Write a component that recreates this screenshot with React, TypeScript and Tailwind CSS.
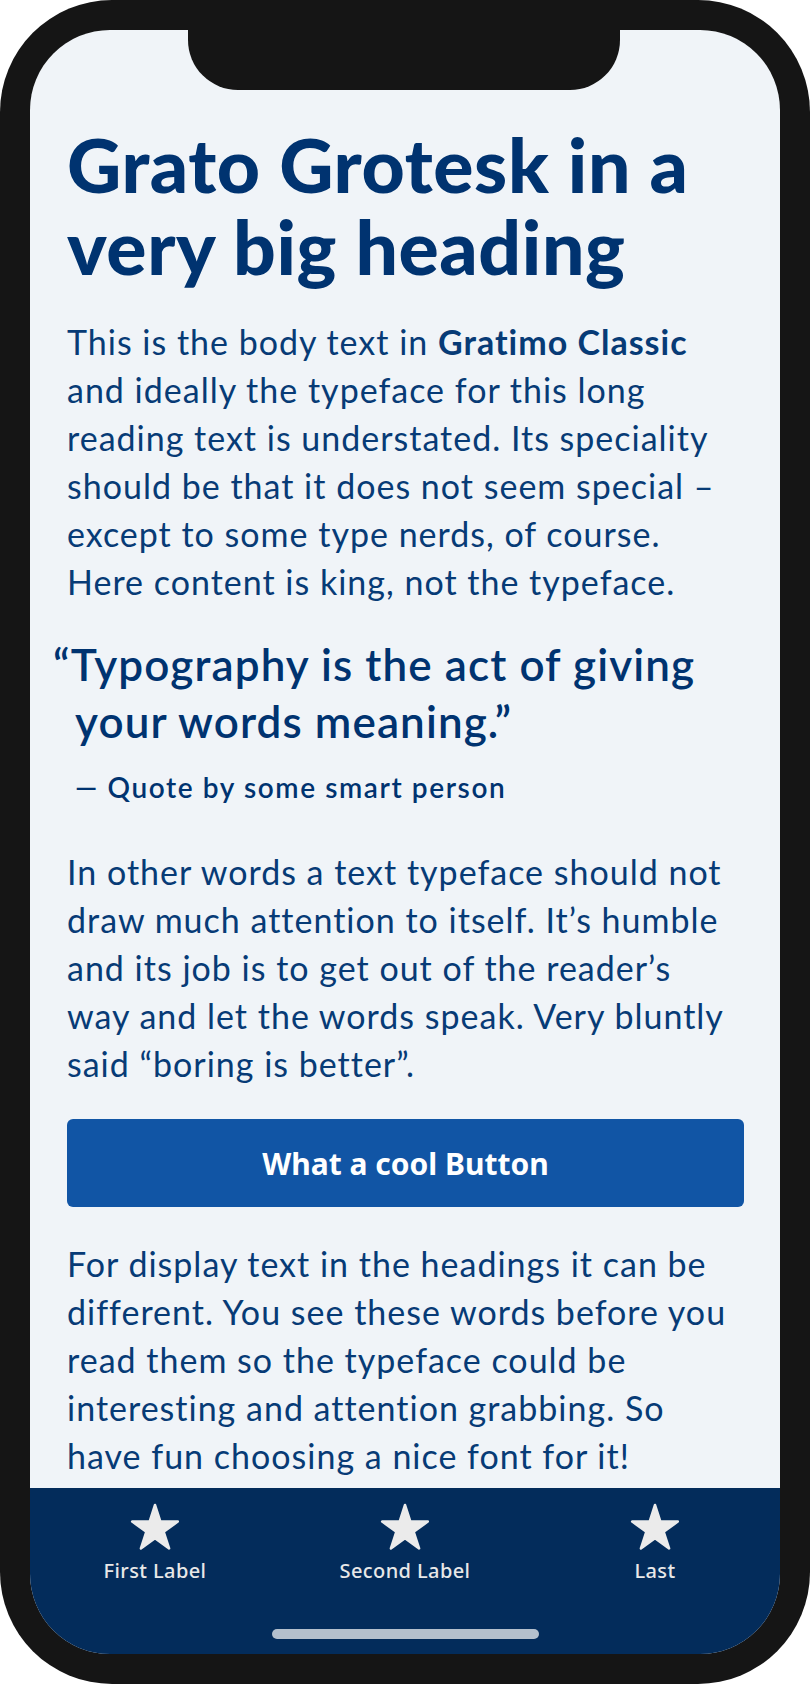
import React from 'react';

const tabs = ['First Label', 'Second Label', 'Last'];

const intro: React.ReactNode[] = [
  <>
    This is the body text in <strong className="font-bold">Gratimo Classic</strong>
  </>,
  'and ideally the typeface for this long',
  'reading text is understated. Its speciality',
  'should be that it does not seem special –',
  'except to some type nerds, of course.',
  'Here content is king, not the typeface.',
];

const middle = [
  'In other words a text typeface should not',
  'draw much attention to itself. It’s humble',
  'and its job is to get out of the reader’s',
  'way and let the words speak. Very bluntly',
  'said “boring is better”.',
];

const outro = [
  'For display text in the headings it can be',
  'different. You see these words before you',
  'read them so the typeface could be',
  'interesting and attention grabbing. So',
  'have fun choosing a nice font for it!',
];

function Lines({ lines, className }: { lines: React.ReactNode[]; className?: string }) {
  return (
    <p className={`text-[34px] leading-[48px] tracking-[1px] whitespace-nowrap text-[#073b76] ${className ?? ''}`}>
      {lines.map((l, i) => (
        <span key={i} className="block">
          {l}
        </span>
      ))}
    </p>
  );
}

function StarIcon() {
  return (
    <svg width="50" height="48" viewBox="0 0 50 48" className="text-[#ebebeb]">
      <polygon
        points="25,2 30.39,18.58 47.83,18.58 33.72,28.83 39.11,45.42 25,35.17 10.89,45.42 16.28,28.83 2.17,18.58 19.61,18.58"
        fill="currentColor"
        stroke="currentColor"
        strokeWidth="2.5"
        strokeLinejoin="round"
      />
    </svg>
  );
}

export default function App() {
  return (
    <div className="w-[810px] h-[1684px] bg-white">
      <div className="w-full h-full bg-[#151515] rounded-[112px] p-[30px]">
        <div className="relative w-full h-full bg-[#f0f4f8] rounded-[80px] overflow-hidden flex flex-col">
          {/* notch */}
          <div className="absolute left-[158px] top-0 w-[432px] h-[60px] bg-[#151515] rounded-b-[50px]" />

          <main className="flex-1 overflow-hidden pl-[37px] pr-[36px] pt-[93px] font-['Lato',sans-serif]">
            <h1 className="text-[75px] leading-[82px] font-black tracking-[0.6px] text-[#003370]">
              Grato Grotesk in a<br />
              very big heading
            </h1>

            <Lines lines={intro} className="mt-[31px]" />

            <blockquote className="mt-[30px] pl-[8px] text-[#003370]">
              <p className="text-[44px] leading-[57px] font-semibold tracking-[1.1px] -indent-[22px]">
                “Typography is the act of giving
                <br />
                your words meaning.”
              </p>
              <p className="mt-[21px] text-[28px] leading-[32px] font-semibold tracking-[1.6px]">
                — Quote by some smart person
              </p>
            </blockquote>

            <Lines lines={middle} className="mt-[45px]" />

            <button className="mt-[31px] w-full h-[88px] rounded-[6px] bg-[#1155a5] text-white text-[30px] font-bold font-['Noto_Sans',sans-serif]">
              What a cool Button
            </button>

            <Lines lines={outro} className="mt-[33px]" />
          </main>

          <nav className="h-[166px] shrink-0 bg-[#032c5b] flex flex-col font-['Noto_Sans',sans-serif]">
            <div className="grid grid-cols-3 pt-[15px]">
              {tabs.map((label) => (
                <div key={label} className="flex flex-col items-center">
                  <StarIcon />
                  <span className="mt-[8px] text-[20px] leading-[24px] font-medium tracking-[0.4px] text-[#e8e8e8]">
                    {label}
                  </span>
                </div>
              ))}
            </div>
            <div className="mt-auto mb-[15px] mx-auto w-[267px] h-[10px] rounded-full bg-[#b4c0cd]" />
          </nav>
        </div>
      </div>
    </div>
  );
}
